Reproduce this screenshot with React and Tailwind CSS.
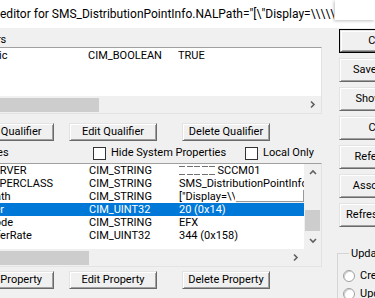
import React from "react";

const qualifiers = [{ name: "dynamic", type: "CIM_BOOLEAN", value: "TRUE" }];

const properties = [
  { name: "__SERVER", type: "CIM_STRING", value: "SCCM01", redacted: true, shift: "ml-[1px]" },
  { name: "__SUPERCLASS", type: "CIM_STRING", value: "SMS_DistributionPointInfoEx" },
  { name: "NALPath", type: "CIM_STRING", value: '["Display=\\\\', tip: true, shift: "-ml-[9px]" },
  { name: "Order", type: "CIM_UINT32", value: "20 (0x14)", selected: true, shift: "ml-[1px]" },
  { name: "SiteCode", type: "CIM_STRING", value: "EFX", shift: "-ml-[7px]" },
  { name: "TransferRate", type: "CIM_UINT32", value: "344 (0x158)", shift: "-ml-[7px]" },
];

const rightButtons = ["Close", "Save Object", "Show MOF", "Class", "References", "Associators", "Refresh Object"];

function Chevron({ dir }) {
  const d = {
    right: "M2 1.5 L5 4.5 L2 7.5",
    up: "M1 5 L4 2 L7 5",
    down: "M1 2 L4 5 L7 2",
  }[dir];
  const size = dir === "right" ? "w-[7px] h-[9px]" : "w-[8px] h-[7px]";
  const vb = dir === "right" ? "0 0 7 9" : "0 0 8 7";
  return (
    <svg viewBox={vb} className={size}>
      <path d={d} fill="none" stroke="#606060" strokeWidth="1.6" />
    </svg>
  );
}

function Btn({ children, className = "" }) {
  return (
    <div
      className={`flex items-center justify-center whitespace-nowrap bg-[#f0f0f0] border border-t-[#e3e3e3] border-l-[#e3e3e3] border-r-[#696969] border-b-[#696969] shadow-[inset_1px_1px_0_#fff,inset_-1px_-1px_0_#a0a0a0] ${className}`}
    >
      {children}
    </div>
  );
}

function Check({ label }) {
  return (
    <div className="flex items-center">
      <div className="w-[13px] h-[13px] bg-white border border-[#333]" />
      <span className="ml-[5px]">{label}</span>
    </div>
  );
}

function Radio({ label }) {
  return (
    <div className="flex items-center h-[18px]">
      <div className="w-[12px] h-[12px] rounded-full bg-white border border-[#a0a0a0] shadow-[inset_1px_1px_0_#d0d0d0]" />
      <span className="ml-[5px] whitespace-nowrap">{label}</span>
    </div>
  );
}

// one list row: name / type / value columns
function Row({ r, cols }) {
  return (
    <div
      className={`relative grid ${cols} h-[13px] leading-[13px] whitespace-nowrap ${
        r.selected ? "bg-[#0078d7] text-white" : ""
      }`}
    >
      <div className="overflow-hidden">
        <span className={`inline-block ${r.shift || ""}`}>{r.name}</span>
      </div>
      <div className="overflow-hidden">{r.type}</div>
      <div className="overflow-hidden flex items-center">
        {r.redacted && (
          <span className="flex mr-[1px]">
            {[0, 1, 2, 3, 4].map((i) => (
              <span key={i} className="inline-block w-[6px] h-[9px] mr-[1.5px] border-y border-dashed border-[#707070]" />
            ))}
          </span>
        )}
        <span>{r.value}</span>
      </div>
      {r.tip && (
        <div className="absolute left-[294px] top-[-1px] w-[68px] h-[12px] bg-white shadow-[1px_1px_1px_rgba(0,0,0,0.4)]" />
      )}
    </div>
  );
}

export default function App() {
  return (
    <div className="w-[375px] h-[298px] overflow-hidden bg-[#f0f0f0] text-black text-[11px] font-['Roboto','Liberation_Sans',sans-serif] flex flex-col">
      {/* title bar */}
      <div className="relative h-[28px] shrink-0 bg-white">
        <div className="w-[334px] overflow-hidden whitespace-nowrap text-[12px] leading-[28px]">
          editor for SMS_DistributionPointInfo.NALPath="[\"Display=\\\\\\\\\\\\
        </div>
        <div className="absolute left-[335px] top-0 w-[40px] h-[20px] bg-white shadow-[-1px_1px_3px_rgba(0,0,0,0.25)]" />
      </div>

      <div className="flex flex-1">
        {/* left pane */}
        <div className="-ml-[60px] w-[382px] shrink-0 flex flex-col">
          <div className="h-[19px] pt-[4px] pl-[20px] leading-[16px]">Qualifiers</div>
          <div className="h-[67px] flex flex-col border border-t-[#a0a0a0] border-l-[#a0a0a0] border-r-[#e3e3e3] border-b-[#e3e3e3] bg-white">
            <div className="flex-1 pt-[1px]">
              {qualifiers.map((q) => (
                <Row key={q.name} r={q} cols="grid-cols-[122px_90px_1fr] pl-[25px]" />
              ))}
            </div>
            <div className="h-[17px] flex bg-[#f0f0f0]">
              <div className="w-[17px]" />
              <div className="flex-1 flex items-center">
                <div className="ml-[25px] w-[116px] h-[14px] bg-[#cdcdcd]" />
              </div>
              <div className="w-[17px] flex items-center justify-center">
                <Chevron dir="right" />
              </div>
            </div>
          </div>

          <div className="mt-[9px] h-[18px] flex pl-[26px]">
            <Btn className="w-[88px]">Add Qualifier</Btn>
            <Btn className="w-[88px] ml-[15px]">Edit Qualifier</Btn>
            <Btn className="w-[88px] ml-[25px]">Delete Qualifier</Btn>
          </div>

          <div className="mt-[3px] h-[19px] flex items-center pl-[18px]">
            <span className="w-[135px]">Properties</span>
            <div className="w-[152px]">
              <Check label="Hide System Properties" />
            </div>
            <Check label="Local Only" />
          </div>

          <div className="h-[104px] flex flex-col border border-t-[#a0a0a0] border-l-[#a0a0a0] border-r-[#e3e3e3] border-b-[#e3e3e3] bg-white">
            <div className="h-[85px] flex">
              <div className="flex-1 overflow-hidden">
                {properties.map((p) => (
                  <Row key={p.name} r={p} cols="grid-cols-[113px_90px_1fr] pl-[35px]" />
                ))}
              </div>
              <div className="w-[17px] flex flex-col bg-[#f0f0f0]">
                <div className="h-[17px] flex items-center justify-center">
                  <Chevron dir="up" />
                </div>
                <div className="flex-1 px-[1px]">
                  <div className="mt-[29px] h-[21px] bg-[#cdcdcd]" />
                </div>
                <div className="h-[17px] flex items-center justify-center">
                  <Chevron dir="down" />
                </div>
              </div>
            </div>
            <div className="h-[17px] flex bg-[#f0f0f0]">
              <div className="w-[17px]" />
              <div className="flex-1 flex items-center">
                <div className="ml-[25px] w-[106px] h-[14px] bg-[#cdcdcd]" />
              </div>
              <div className="w-[17px] flex items-center justify-center">
                <Chevron dir="right" />
              </div>
              <div className="w-[17px]" />
            </div>
          </div>

          <div className="mt-[4px] h-[18px] flex pl-[26px]">
            <Btn className="w-[88px]">Add Property</Btn>
            <Btn className="w-[88px] ml-[15px]">Edit Property</Btn>
            <Btn className="w-[88px] ml-[25px]">Delete Property</Btn>
          </div>
        </div>

        {/* right column */}
        <div className="ml-[17px] w-[86px] shrink-0 flex flex-col">
          <div className="mt-[1px] flex flex-col gap-[5px]">
            {rightButtons.map((b, i) =>
              i === 0 ? (
                <div key={b} className="h-[24px] border border-black">
                  <Btn className="h-full">{b}</Btn>
                </div>
              ) : (
                <Btn key={b} className="h-[24px]">
                  {b}
                </Btn>
              )
            )}
          </div>
          <fieldset className="mt-[20px] -ml-[2px] w-[120px] border border-[#d5d5d5] pl-[5px] pt-[7px]">
            <legend className="ml-[6px] px-[2px] leading-[13px]">Update type</legend>
            <Radio label="Create only" />
            <Radio label="Update only" />
          </fieldset>
        </div>
      </div>
    </div>
  );
}
